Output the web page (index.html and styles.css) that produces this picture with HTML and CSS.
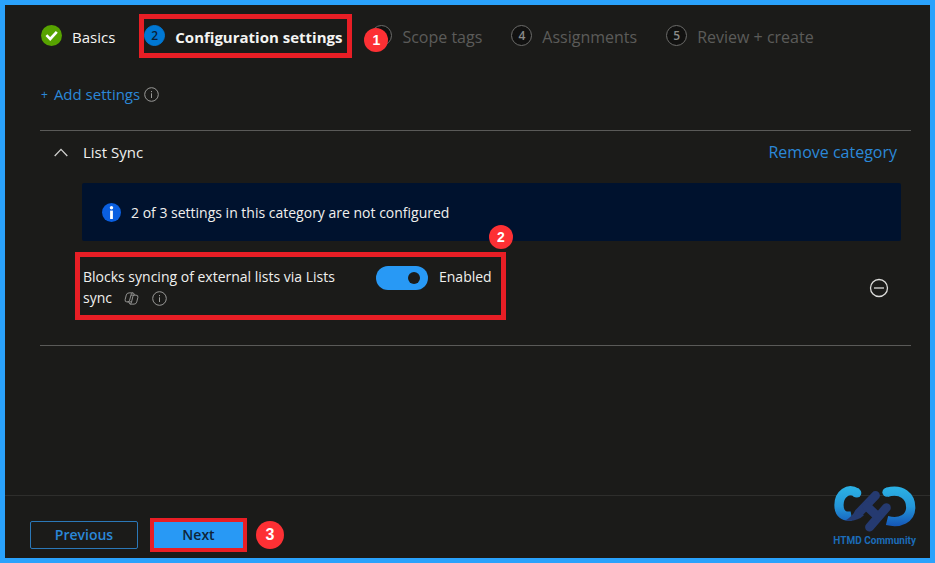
FILE: index.html
```html
<!doctype html>
<html lang="en">
  <head>
    <meta charset="UTF-8" />
    <meta name="viewport" content="width=device-width, initial-scale=1.0" />
    <title>Configuration settings</title>
    <link rel="stylesheet" href="styles.css">
  </head>
  <body>
    <div class="page">
      <nav class="steps" aria-label="Wizard steps">
        <a class="step done" href="#basics">
          <svg class="step-icon" viewBox="0 0 21 21">
            <circle cx="10.5" cy="10.5" r="10.5" fill="#57a300" />
            <path d="M5.4 10.2 L9.2 14 L15.8 6.8" fill="none" stroke="#fff" stroke-width="2.6" />
          </svg>
          <span class="step-label">Basics</span>
        </a>
        <a class="step current" href="#configuration" aria-current="step">
          <span class="step-number">2</span>
          <span class="step-label">Configuration settings</span>
        </a>
        <a class="step" href="#scope-tags">
          <span class="step-number">3</span>
          <span class="step-label">Scope tags</span>
          <span class="callout callout-1">1</span>
        </a>
        <a class="step" href="#assignments">
          <span class="step-number">4</span>
          <span class="step-label">Assignments</span>
        </a>
        <a class="step" href="#review">
          <span class="step-number">5</span>
          <span class="step-label">Review + create</span>
        </a>
      </nav>

      <main class="content">
        <div class="add-row">
          <a class="link add-link" href="#add"><span class="plus">+</span>Add settings</a>
          <svg class="info" viewBox="0 0 15 15">
            <circle cx="7.5" cy="7.5" r="6.8" />
            <path d="M7.5 6.3 V11 M7.5 4 V5.2" />
          </svg>
        </div>

        <section class="category">
          <header class="category-header">
            <button class="collapse" type="button" aria-label="Collapse List Sync">
              <svg viewBox="0 0 14 9"><path d="M0.7 8 L7 1.4 L13.3 8" /></svg>
            </button>
            <h2>List Sync</h2>
            <a class="link" href="#remove">Remove category</a>
          </header>

          <div class="banner">
            <svg viewBox="0 0 19 19">
              <circle cx="9.5" cy="9.5" r="9.5" fill="#0a5fe0" />
              <circle cx="9.5" cy="4.8" r="1.7" fill="#fff" />
              <path d="M9.5 7.6 V16" stroke="#fff" stroke-width="2.8" />
            </svg>
            <span>2 of 3 settings in this category are not configured</span>
          </div>

          <div class="setting">
            <div class="setting-main">
              <label class="setting-label" for="block-sync">
                Blocks syncing of external lists via Lists sync
                <svg class="copilot" viewBox="0 0 16 14">
                  <path d="M5.4 1 H9.3 Q10.4 1 10.7 2.2 L11 3.4 H12.8 Q15.3 3.4 14.8 5.8 L13.6 10.6 Q13 13 10.8 13 H7 Q5.8 13 5.5 11.8 L5.2 10.6 H3 Q0.7 10.6 1.2 8.2 L2.4 3.4 Q3 1 5.4 1 Z" />
                  <path d="M9.3 1 Q8 1.2 7.6 2.8 L6 8.8 Q5.5 10.6 3.8 10.6 M11 3.4 Q9.8 3.5 9.4 5 L8 11 Q7.6 12.8 6.6 13 M7.4 3.4 H11 M5.4 10.6 H8.2" />
                </svg>
                <svg class="info" viewBox="0 0 15 15">
                  <circle cx="7.5" cy="7.5" r="6.8" />
                  <path d="M7.5 6.3 V11 M7.5 4 V5.2" />
                </svg>
              </label>
              <input class="toggle" id="block-sync" type="checkbox" role="switch" checked />
              <span class="state">Enabled</span>
              <span class="callout callout-2">2</span>
            </div>
            <button class="remove" type="button" aria-label="Remove setting">
              <svg viewBox="0 0 20 20">
                <circle cx="10" cy="10" r="8.5" />
                <path d="M5 10 H15" />
              </svg>
            </button>
          </div>
        </section>
      </main>

      <footer class="footer">
        <button class="btn" type="button">Previous</button>
        <button class="btn primary" type="button">Next</button>
        <span class="callout">3</span>
      </footer>

      <div class="brand">
        <svg viewBox="13 12 249 144">
          <defs>
            <linearGradient id="ring" x1="0" y1="20" x2="0" y2="135" gradientUnits="userSpaceOnUse">
              <stop offset="0" stop-color="#2bb0e4" />
              <stop offset="0.5" stop-color="#2496d8" />
              <stop offset="1" stop-color="#1558b8" />
            </linearGradient>
          </defs>
          <g fill="none" stroke-width="28">
            <path stroke="url(#ring)" d="M82 36 C56 18 28 40 28 73 C28 99 44 110 66 106" />
            <circle cx="82" cy="36" r="14" fill="url(#ring)" stroke="none" />
            <path stroke="url(#ring)" d="M174 34 C220 22 246 47 246 80 C246 114 214 130 174 120" />
            <circle cx="174" cy="34" r="14" fill="url(#ring)" stroke="none" />
            <g stroke="#253a70" stroke-linecap="round" stroke-width="27">
              <path d="M139 44 L88 97" />
              <path d="M172 81 L121 140" />
              <path d="M112 76 L144 106" />
            </g>
            <path fill="#253a70" stroke="none" d="M47 120 Q66 110 80 88 L104 104 Q84 124 47 120 Z" />
          </g>
        </svg>
        <span>HTMD Community</span>
      </div>
    </div>
  </body>
</html>
```

FILE: styles.css
```css
* {
  box-sizing: border-box;
}

body {
  margin: 0;
  background-color: #1b1b19;
  color: #f0f0ee;
  font-family: "Open Sans", "Noto Sans", sans-serif;
  font-size: 14px;
  line-height: 21px;
}

a {
  color: inherit;
  text-decoration: none;
}

button {
  font: inherit;
  cursor: pointer;
}

svg {
  display: block;
  flex: none;
}

.page {
  position: relative;
  display: flex;
  flex-direction: column;
  min-height: 100vh;
  border: 5px solid #2aa2fc;
}

/* Steps */

.steps {
  display: flex;
  gap: 29px;
  padding: 20px 36px 0;
  font-size: 16px;
  white-space: nowrap;
}

.step {
  position: relative;
  display: flex;
  align-items: flex-start;
  gap: 10px;
  color: #5b5b59;
}

.step.done,
.step.current {
  color: #f4f4f2;
  font-size: 15px;
}

.step.current {
  font-weight: 700;
}

.step.current::after {
  content: "";
  position: absolute;
  inset: -11px -10px -10px -5px;
  border: 5px solid #e81e25;
}

.step-label {
  padding-top: 2px;
}

.step-icon,
.step-number {
  flex: none;
  width: 21px;
  height: 21px;
}

.step-number {
  border: 1px solid #6c6c6a;
  border-radius: 50%;
  background-color: #111110;
  color: #8a8a88;
  font-size: 12px;
  font-weight: 600;
  line-height: 19px;
  text-align: center;
}

.current .step-number {
  border-color: #0078d4;
  background-color: #0078d4;
  color: #0b2036;
}

.callout {
  width: 28px;
  height: 28px;
  border-radius: 50%;
  background-color: #fd3034;
  color: #fff;
  font-family: "Liberation Sans", Arial, sans-serif;
  font-size: 16px;
  font-weight: 700;
  line-height: 28px;
  text-align: center;
}

.callout-1,
.callout-2 {
  position: absolute;
  width: 24px;
  height: 24px;
  font-size: 14px;
  line-height: 24px;
}

.callout-1 {
  top: 3px;
  left: -7px;
}

/* Content */

.content {
  flex: 1;
  padding: 36px 19px 0 35px;
}

.link {
  color: #2b88d8;
}

.add-row {
  display: flex;
  align-items: center;
  gap: 4px;
}

.add-link {
  display: flex;
  gap: 6px;
  padding-left: 1px;
  font-size: 15px;
}

.plus {
  font-size: 12px;
}

.info,
.copilot {
  width: 15px;
  height: 15px;
  fill: none;
  stroke: #9a9a98;
}

.category {
  margin-top: 25px;
  padding-bottom: 25px;
  border-top: 1px solid #5a5a58;
  border-bottom: 1px solid #5a5a58;
}

.category-header {
  display: flex;
  align-items: center;
  padding: 11px 14px 0;
  font-size: 16px;
}

.category-header h2 {
  flex: 1;
  margin: 0;
  font-size: 15px;
  font-weight: 400;
}

.collapse {
  width: 29px;
  padding: 0;
  border: 0;
  background: none;
}

.collapse svg {
  width: 14px;
  fill: none;
  stroke: #d0d0ce;
  stroke-width: 1.3;
}

.banner {
  display: flex;
  align-items: center;
  gap: 10px;
  height: 58px;
  margin: 20px 10px 0 42px;
  padding: 0 20px;
  border-radius: 2px;
  background-color: #00122e;
}

.banner svg {
  width: 19px;
}

.setting {
  display: flex;
  align-items: center;
  justify-content: space-between;
  margin: 11px 22px 0 35px;
}

.setting-main {
  position: relative;
  display: flex;
  align-items: flex-start;
  width: 431px;
  padding: 9px 3px 7px;
  border: 5px solid #e81e25;
}

.setting-label {
  width: 270px;
  margin-right: 23px;
}

.setting-label svg {
  display: inline-block;
  margin-left: 8px;
  vertical-align: -3px;
}

.setting-label .info {
  margin-left: 10px;
}

.toggle {
  display: flex;
  align-items: center;
  justify-content: flex-end;
  flex: none;
  width: 52px;
  height: 24px;
  margin: 0 11px 0 0;
  padding-right: 8px;
  border-radius: 12px;
  background-color: #2899f5;
  appearance: none;
}

.toggle::before {
  content: "";
  width: 12px;
  height: 12px;
  border-radius: 50%;
  background-color: #1b1b19;
}

.callout-2 {
  top: -32px;
  right: -12px;
}

.remove {
  padding: 4px 0 0;
  border: 0;
  background: none;
}

.remove svg {
  width: 20px;
  fill: none;
  stroke: #dcdcda;
  stroke-width: 1.3;
}

/* Footer */

.footer {
  display: flex;
  align-items: center;
  gap: 9px;
  padding: 22px 25px 6px;
  border-top: 1px solid #2e2e2c;
}

.btn {
  width: 108px;
  height: 28px;
  padding: 0 0 2px;
  border: 1px solid #2b78b8;
  border-radius: 2px;
  background: none;
  color: #2b88d8;
  font-weight: 600;
}

.btn.primary {
  width: 97px;
  height: 34px;
  margin-left: 3px;
  border: 4px solid #e81e25;
  border-radius: 0;
  background-color: #2899f5;
  color: #0f2438;
}

/* Watermark */

.brand {
  position: absolute;
  right: 14px;
  bottom: 10px;
  display: flex;
  flex-direction: column;
  align-items: center;
  color: #1c6cb8;
  font-family: Roboto, sans-serif;
  font-size: 10px;
  font-weight: 700;
  line-height: 14px;
}

.brand svg {
  width: 82px;
  margin-bottom: 2px;
}
```
